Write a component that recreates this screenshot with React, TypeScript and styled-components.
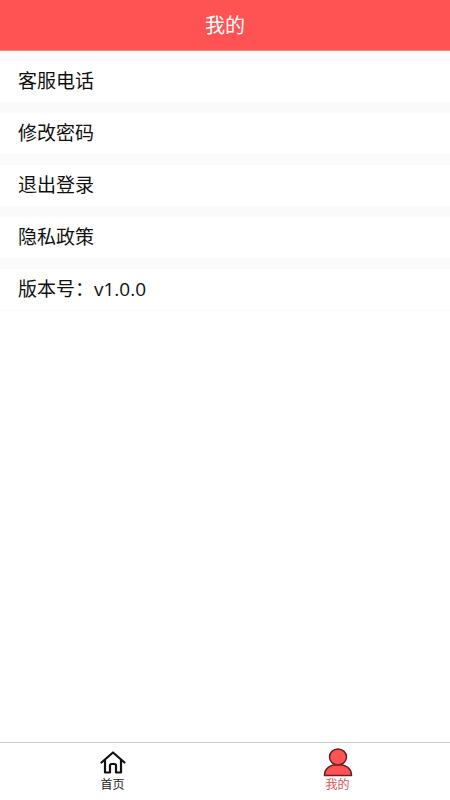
import { FC } from 'react';
import styled, { createGlobalStyle } from 'styled-components';

const GlobalStyle = createGlobalStyle`
	html, body {
		margin: 0;
		padding: 0;
		background: #ffffff;
		font-family: 'Open Sans', 'Noto Sans CJK SC', sans-serif;
	}
	* {
		box-sizing: border-box;
	}
`;

const menuItems = ['客服电话', '修改密码', '退出登录', '隐私政策', '版本号：v1.0.0'];

const HomeIcon: FC = () => (
	<svg width='26' height='23' viewBox='0 0 26 23' fill='none'>
		<path
			d='M1.5 11.5 L13 1.5 L24.5 11.5 M5 9 V21.5 H10 V14.5 Q10 13 11.5 13 H14.5 Q16 13 16 14.5 V21.5 H21 V9'
			stroke='#111111'
			strokeWidth='2.2'
			strokeLinecap='round'
			strokeLinejoin='round'
		/>
	</svg>
);

const UserIcon: FC = () => (
	<svg width='30' height='29' viewBox='0 0 30 29' fill='none'>
		<path
			d='M1.5 27.5 C1.5 20.5 7 16.5 15 16.5 C23 16.5 28.5 20.5 28.5 27.5 Z'
			fill='#ff5252'
			stroke='#6b1f24'
			strokeWidth='1.5'
			strokeLinejoin='round'
		/>
		<ellipse cx='15' cy='9' rx='8.5' ry='8' fill='#ff5252' stroke='#6b1f24' strokeWidth='1.5' />
	</svg>
);

const App: FC = () => (
	<Page>
		<GlobalStyle />
		<Header>我的</Header>
		<Menu>
			{menuItems.map((item) => (
				<MenuRow key={item}>{item}</MenuRow>
			))}
		</Menu>
		<TabBar>
			<Tab>
				<IconSlot>
					<HomeIcon />
				</IconSlot>
				<TabLabel>首页</TabLabel>
			</Tab>
			<Tab>
				<IconSlot>
					<UserIcon />
				</IconSlot>
				<TabLabel $active>我的</TabLabel>
			</Tab>
		</TabBar>
	</Page>
);

export default App;

const Page = styled.div`
	display: flex;
	flex-direction: column;
	width: 450px;
	height: 800px;
	background: #ffffff;
`;

const Header = styled.header`
	display: flex;
	align-items: center;
	justify-content: center;
	height: 51px;
	padding-bottom: 2px;
	border-bottom: 1px solid #f08a88;
	background: #ff5252;
	color: #ffffff;
	font-size: 20px;
`;

const Menu = styled.main`
	flex: 1;
	display: flex;
	flex-direction: column;
	border-top: 10px solid #fafafa;
`;

const MenuRow = styled.div`
	display: flex;
	align-items: center;
	height: 52px;
	padding: 0 18px 4px;
	border-bottom: 11px solid #fafafa;
	background: #ffffff;
	color: #111111;
	font-size: 19px;

	&:last-child {
		height: 42px;
		border-bottom-width: 1px;
	}
`;

const TabBar = styled.nav`
	display: grid;
	grid-template-columns: 1fr 1fr;
	height: 58px;
	border-top: 1px solid #cccccc;
	background: #ffffff;
`;

const Tab = styled.div`
	display: flex;
	flex-direction: column;
	align-items: center;
	padding-top: 4px;
	gap: 1px;
`;

const IconSlot = styled.div`
	display: flex;
	align-items: center;
	justify-content: center;
	height: 30px;
`;

const TabLabel = styled.span<{ $active?: boolean }>`
	color: ${({ $active }) => ($active ? '#d9534f' : '#222222')};
	font-size: 12px;
	line-height: 14px;
`;
